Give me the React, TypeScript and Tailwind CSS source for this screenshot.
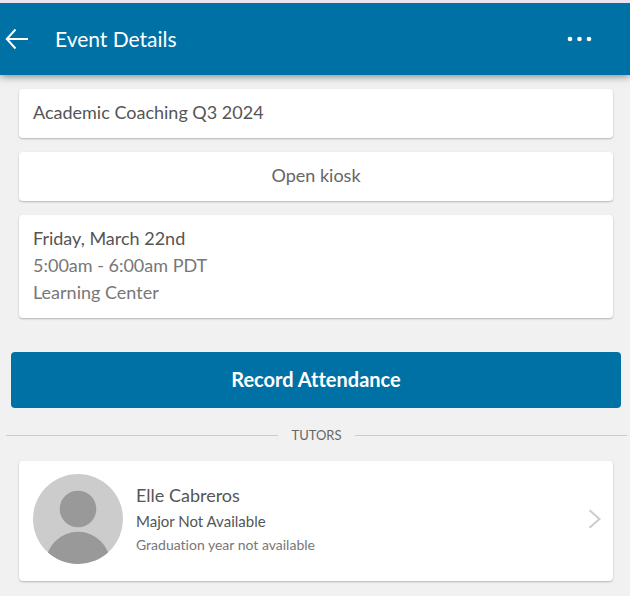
import type { ReactNode } from "react";

type Tutor = {
  name: string;
  major: string;
  graduation: string;
};

const TUTORS: Tutor[] = [
  {
    name: "Elle Cabreros",
    major: "Major Not Available",
    graduation: "Graduation year not available",
  },
];

const CARD = "rounded bg-white shadow-[0_1px_2px_rgba(0,0,0,0.25)]";

function Header() {
  return (
    <header className="relative flex h-[75px] items-center border-t-3 border-[#e9e4ee] bg-[#0071a4] pl-[5px] pr-[38px] text-white shadow-[0_1px_8px_rgba(0,0,0,0.5)]">
      <button type="button" aria-label="Back">
        <svg width="24" height="22" viewBox="0 0 24 22" fill="none" stroke="currentColor" strokeWidth="2">
          <path d="M10.5 1.5 1.8 11l8.7 9.5M2 11h21" />
        </svg>
      </button>
      <h1 className="ml-[26px] flex-1 text-[21px] leading-7">Event Details</h1>
      <button type="button" aria-label="More options">
        <svg width="25" height="6" viewBox="0 0 25 6" fill="currentColor">
          <circle cx="3" cy="3" r="2.3" />
          <circle cx="12.5" cy="3" r="2.3" />
          <circle cx="22" cy="3" r="2.3" />
        </svg>
      </button>
    </header>
  );
}

function Divider({ children }: { children: ReactNode }) {
  return (
    <div className="mt-[15px] flex items-center gap-[13px] pl-[6px] pr-[3px]">
      <span className="h-px flex-1 bg-[#cbcbcb]" />
      <h2 className="text-[13px] leading-6 text-[#666]">{children}</h2>
      <span className="h-px flex-1 bg-[#cbcbcb]" />
    </div>
  );
}

function Avatar() {
  return (
    <svg className="size-[90px] shrink-0 rounded-full" viewBox="0 0 90 90" aria-hidden="true">
      <rect width="90" height="90" fill="#ccc" />
      <circle cx="45" cy="35" r="18.3" fill="#999" />
      <circle cx="45" cy="90" r="32.3" fill="#999" />
    </svg>
  );
}

function TutorCard({ tutor }: { tutor: Tutor }) {
  return (
    <a href="#tutor" className={`${CARD} flex h-[120px] items-center pb-1 pl-[14px] pr-3`}>
      <Avatar />
      <div className="ml-[13px] flex-1">
        <h3 className="text-lg leading-7 text-[#555]">{tutor.name}</h3>
        <p className="text-[15px] leading-6 text-[#555]">{tutor.major}</p>
        <p className="text-sm leading-6 text-[#777]">{tutor.graduation}</p>
      </div>
      <svg width="13" height="20" viewBox="0 0 13 20" fill="none" stroke="#ccc" strokeWidth="2">
        <path d="m1.5 1.3 10 8.7-10 8.7" />
      </svg>
    </a>
  );
}

export default function App() {
  return (
    <div className="min-h-screen bg-[#f1f1f1] pb-[15px] font-['Lato','Noto_Sans',sans-serif] text-[#555] [font-variant-ligatures:none]">
      <Header />
      <main>
        <div className="flex flex-col gap-[14px] pl-[19px] pr-[17px] pt-[14px] text-lg leading-[27px]">
          <h2 className={`${CARD} px-[14px] pb-3 pt-[10px]`}>Academic Coaching Q3 2024</h2>
          <button type="button" className={`${CARD} px-[14px] pb-3 pt-[10px] text-[#666]`}>
            Open kiosk
          </button>
          <div className={`${CARD} px-[14px] pb-3 pt-[10px] text-[#777]`}>
            <p className="text-[#555]">Friday, March 22nd</p>
            <p>5:00am - 6:00am PDT</p>
            <p>Learning Center</p>
          </div>
        </div>
        <div className="mt-[34px] pl-[11px] pr-[9px]">
          <button type="button" className="h-14 w-full rounded bg-[#0071a4] pb-[2px] text-[20px] font-bold text-white">
            Record Attendance
          </button>
        </div>
        <Divider>TUTORS</Divider>
        <div className="mt-[14px] flex flex-col gap-[14px] pl-[19px] pr-[17px]">
          {TUTORS.map((tutor) => (
            <TutorCard key={tutor.name} tutor={tutor} />
          ))}
        </div>
      </main>
    </div>
  );
}
